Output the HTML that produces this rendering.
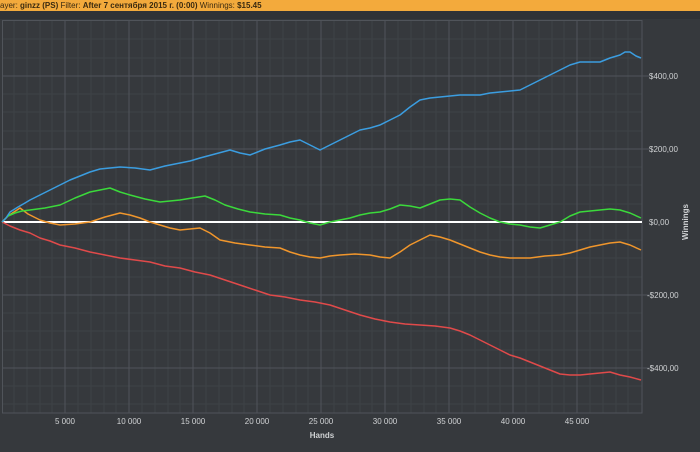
<!DOCTYPE html>
<html><head><meta charset="utf-8"><style>
html,body{margin:0;padding:0;width:700px;height:452px;overflow:hidden;background:#36393d;font-family:"Liberation Sans",sans-serif}
.hdr{position:absolute;left:0;top:0;width:700px;height:11px;background:#f3aa3c;font-size:8px;line-height:11px;color:#3a2a10;white-space:nowrap}
.hdr b{font-weight:bold}
svg{position:absolute;left:0;top:0}
</style></head><body>
<svg width="700" height="452" viewBox="0 0 700 452">
<rect x="0" y="11" width="700" height="441" fill="#36393d"/>
<rect x="0" y="11" width="700" height="8" fill="#303236"/>
<g stroke="#3e4246" stroke-width="1">
<path d="M14 20V413M27 20V413M40 20V413M52 20V413M78 20V413M91 20V413M104 20V413M116 20V413M142 20V413M155 20V413M168 20V413M180 20V413M206 20V413M219 20V413M232 20V413M244 20V413M270 20V413M283 20V413M296 20V413M308 20V413M334 20V413M347 20V413M360 20V413M372 20V413M398 20V413M411 20V413M424 20V413M436 20V413M462 20V413M475 20V413M488 20V413M500 20V413M526 20V413M539 20V413M552 20V413M564 20V413M590 20V413M603 20V413M616 20V413M628 20V413"/>
<path d="M2 39H642M2 58H642M2 94H642M2 112H642M2 131H642M2 167H642M2 185H642M2 204H642M2 240H642M2 258H642M2 277H642M2 313H642M2 331H642M2 350H642M2 386H642M2 404H642"/>
</g>
<g stroke="#50545a" stroke-width="1">
<path d="M65 20V413M129 20V413M193 20V413M257 20V413M321 20V413M385 20V413M449 20V413M513 20V413M577 20V413"/>
<path d="M2 76H650M2 149H650M2 295H650M2 368H650"/>
<rect x="2.5" y="20.5" width="639.5" height="392.5" fill="none"/>
</g>
<line x1="2" y1="222" x2="642" y2="222" stroke="#ffffff" stroke-width="2"/>
<g fill="none" stroke-width="1.5" stroke-linejoin="round">
<polyline stroke="#e04a4a" points="2,222 10,226 20,230 30,233 40,238 50,241 60,245 75,248 90,252 105,255 120,258 135,260 150,262 165,266 180,268 195,272 210,275 225,280 240,285 255,290 270,295 285,297 300,300 315,302 330,305 345,310 360,315 375,319 390,322 405,324 420,325 435,326 450,328 460,331 470,335 480,340 490,345 500,350 510,355 520,358 530,362 540,366 550,370 560,374 570,375 580,375 590,374 600,373 610,372 620,375 630,377 641,380"/>
<polyline stroke="#f0962c" points="2,222 8,216 14,212 20,208 28,214 40,220 50,223 60,225 75,224 90,222 105,217 120,213 130,215 140,218 150,222 160,225 170,228 180,230 190,229 200,228 210,233 220,240 235,243 250,245 265,247 280,248 290,252 300,255 310,257 320,258 330,256 340,255 355,254 370,255 380,257 390,258 400,252 410,245 420,240 430,235 440,237 450,240 460,244 470,248 480,252 490,255 500,257 510,258 520,258 530,258 545,256 560,255 570,253 580,250 590,247 600,245 610,243 620,242 630,245 641,250"/>
<polyline stroke="#3bd93b" points="2,222 8,216 15,213 22,211 30,210 45,208 60,205 75,198 90,192 100,190 110,188 120,192 130,195 145,199 160,202 170,201 180,200 192,198 205,196 215,200 225,205 238,209 250,212 265,214 280,215 290,218 300,220 310,223 320,225 330,222 340,220 350,218 360,215 370,213 380,212 390,209 400,205 410,206 420,208 430,204 440,200 450,199 460,200 470,207 480,213 490,218 500,222 510,224 520,225 530,227 540,228 550,225 560,222 570,216 580,212 590,211 600,210 610,209 620,210 630,213 641,218"/>
<polyline stroke="#3b9de0" points="2,222 6,218 10,212 18,207 25,203 30,200 40,195 50,190 60,185 70,180 80,176 90,172 100,169 110,168 120,167 135,168 150,170 165,166 180,163 190,161 200,158 215,154 230,150 240,153 250,155 265,149 280,145 290,142 300,140 310,145 320,150 330,145 340,140 350,135 360,130 370,128 380,125 390,120 400,115 410,107 420,100 430,98 440,97 450,96 460,95 470,95 480,95 490,93 500,92 510,91 520,90 530,85 540,80 550,75 560,70 570,65 580,62 590,62 600,62 610,58 620,55 625,52 630,52 636,56 641,58"/>
</g>
<g fill="#d0d2d4" font-family="Liberation Sans, sans-serif" font-size="8">
<text x="649" y="79">$400,00</text>
<text x="649" y="152">$200,00</text>
<text x="649" y="225">$0,00</text>
<text x="647" y="298">-$200,00</text>
<text x="647" y="371">-$400,00</text>
<text x="65" y="424" text-anchor="middle">5 000</text>
<text x="129" y="424" text-anchor="middle">10 000</text>
<text x="193" y="424" text-anchor="middle">15 000</text>
<text x="257" y="424" text-anchor="middle">20 000</text>
<text x="321" y="424" text-anchor="middle">25 000</text>
<text x="385" y="424" text-anchor="middle">30 000</text>
<text x="449" y="424" text-anchor="middle">35 000</text>
<text x="513" y="424" text-anchor="middle">40 000</text>
<text x="577" y="424" text-anchor="middle">45 000</text>
<text x="322" y="438" text-anchor="middle" font-weight="bold">Hands</text>
<text x="0" y="0" font-weight="bold" transform="translate(688,222) rotate(-90)" text-anchor="middle">Winnings</text>
</g>
<circle cx="694" cy="5" r="3.5" fill="#2f6fb5"/>
</svg>
<div class="hdr">ayer: <b>ginzz (PS)</b> Filter: <b>After 7 сентября 2015 г. (0:00)</b> Winnings: <b>$15.45</b></div>
</body></html>
